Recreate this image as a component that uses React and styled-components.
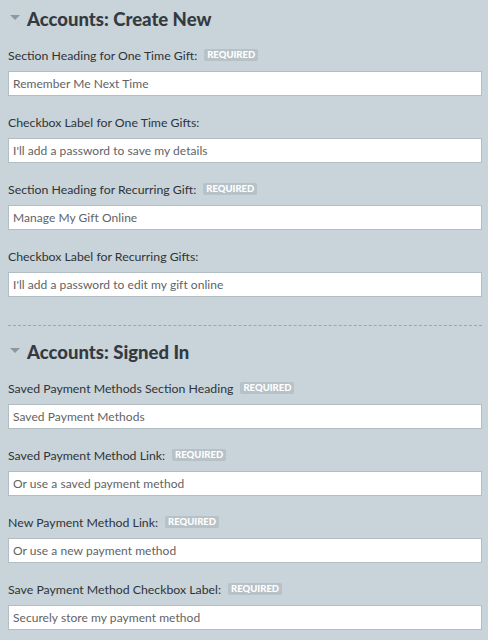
import React from "react";
import styled, { createGlobalStyle } from "styled-components";

const Global = createGlobalStyle`
  html, body { margin: 0; padding: 0; background: #c8d3da; }
  body { font-family: Lato, "Open Sans", "Liberation Sans", sans-serif; }
  * { box-sizing: border-box; }
`;

const Page = styled.div`
  width: 488px;
  min-height: 640px;
  background: #c8d3da;
  padding: 7px 6px 0 8px;
`;

const Section = styled.section`
  padding: ${(p) => (p.$first ? "0" : "14px")} 0 28px;
  border-bottom: ${(p) => (p.$last ? "none" : "1px dashed #9ca6ad")};
`;

const Heading = styled.h2`
  display: flex;
  align-items: center;
  gap: 7px;
  margin: 0 0 16px;
  height: 24px;
  font-size: 18.5px;
  font-weight: 900;
  color: #343a40;
`;

const Caret = styled.span`
  width: 0;
  height: 0;
  margin-left: 2px;
  margin-top: -3px;
  border-left: 5px solid transparent;
  border-right: 5px solid transparent;
  border-top: 5px solid #8c979e;
`;

const Field = styled.div`
  display: flex;
  flex-direction: column;
  & + & { margin-top: 18px; }
`;

const Label = styled.label`
  display: flex;
  align-items: center;
  gap: 7px;
  height: 16px;
  margin-bottom: 8px;
  font-size: 12.3px;
  color: #2f3438;
`;

const Badge = styled.span`
  display: inline-block;
  background: #b7c1c8;
  color: #ffffff;
  font-size: 9.5px;
  font-weight: 900;
  line-height: 12px;
  padding: 0 3px;
  border-radius: 2px;
`;

const Input = styled.input`
  width: 474px;
  height: 25px;
  border: 1px solid #b3bdc4;
  background: #fff;
  padding: 0 4px;
  font-family: inherit;
  font-size: 12px;
  color: #5f6366;
  letter-spacing: 0.05px;
  outline: none;
`;

const sections = [
  {
    title: "Accounts: Create New",
    fields: [
      { label: "Section Heading for One Time Gift:", req: true, value: "Remember Me Next Time" },
      { label: "Checkbox Label for One Time Gifts:", req: false, value: "I'll add a password to save my details" },
      { label: "Section Heading for Recurring Gift:", req: true, value: "Manage My Gift Online" },
      { label: "Checkbox Label for Recurring Gifts:", req: false, value: "I'll add a password to edit my gift online" },
    ],
  },
  {
    title: "Accounts: Signed In",
    fields: [
      { label: "Saved Payment Methods Section Heading", req: true, value: "Saved Payment Methods" },
      { label: "Saved Payment Method Link:", req: true, value: "Or use a saved payment method" },
      { label: "New Payment Method Link:", req: true, value: "Or use a new payment method" },
      { label: "Save Payment Method Checkbox Label:", req: true, value: "Securely store my payment method" },
    ],
  },
];

export default function App() {
  return (
    <>
      <Global />
      <Page>
        {sections.map((s, i) => (
          <Section key={s.title} $first={i === 0} $last={i === sections.length - 1}>
            <Heading>
              <Caret />
              {s.title}
            </Heading>
            {s.fields.map((f) => (
              <Field key={f.label}>
                <Label>
                  {f.label}
                  {f.req && <Badge>REQUIRED</Badge>}
                </Label>
                <Input defaultValue={f.value} readOnly />
              </Field>
            ))}
          </Section>
        ))}
      </Page>
    </>
  );
}
